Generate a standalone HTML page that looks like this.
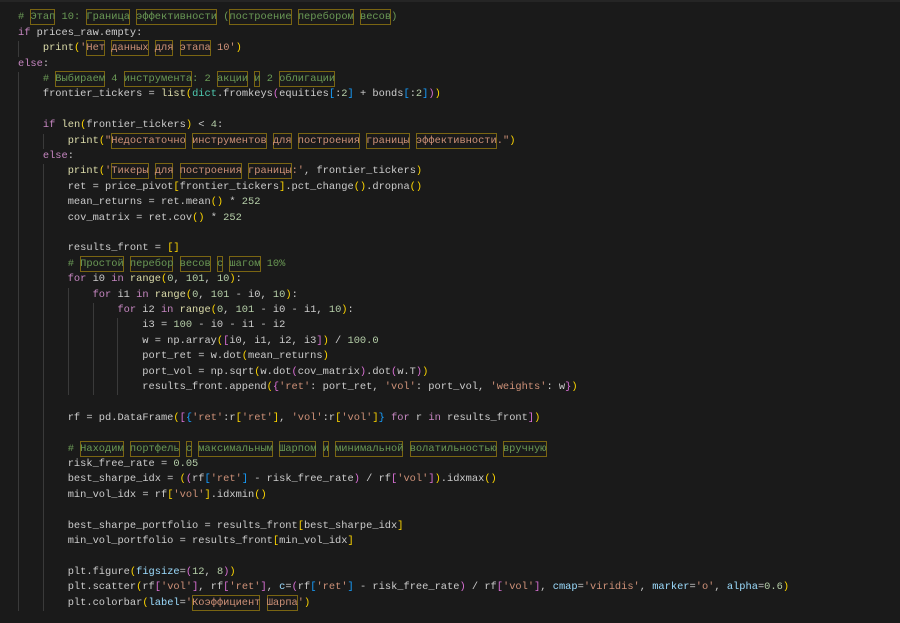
<!DOCTYPE html>
<html><head><meta charset="utf-8"><style>
html,body{margin:0;padding:0;background:#1a1a1a;width:900px;height:623px;overflow:hidden}
.top{position:absolute;left:0;top:0;width:900px;height:2px;background:#252525}
.code{position:absolute;left:18px;top:10.3px;font-family:"Liberation Mono",monospace;font-size:10.37px;line-height:15.42px;color:#cccccc}
.l{height:15.42px;white-space:pre}
i{display:inline-block;width:4ch;height:15.42px;vertical-align:top;box-shadow:inset 1px 0 0 #3a3a3a;font-style:normal}
.k{color:#c586c0}.f{color:#dcdcaa}.s{color:#ce9178}.c{color:#6a9955}.n{color:#b5cea8}.p{color:#9cdcfe}.t{color:#4ec9b0}
.b1{color:#ffd700}.b2{color:#da70d6}.b3{color:#179fff}
.u{padding:2px 0;box-shadow:inset 0 0 0 1px #7a6512}
</style></head><body><div class="top"></div>
<div class="code">
<div class="l"><span class="c"># <span class="u">Этап</span> 10: <span class="u">Граница</span> <span class="u">эффективности</span> (<span class="u">построение</span> <span class="u">перебором</span> <span class="u">весов</span>)</span></div>
<div class="l"><span class="k">if</span> prices_raw.empty:</div>
<div class="l"><i></i><span class="f">print</span><span class="b1">(</span><span class="s">'<span class="u">Нет</span> <span class="u">данных</span> <span class="u">для</span> <span class="u">этапа</span> 10'</span><span class="b1">)</span></div>
<div class="l"><span class="k">else</span>:</div>
<div class="l"><i></i><span class="c"># <span class="u">Выбираем</span> 4 <span class="u">инструмента</span>: 2 <span class="u">акции</span> <span class="u">и</span> 2 <span class="u">облигации</span></span></div>
<div class="l"><i></i>frontier_tickers = <span class="f">list</span><span class="b1">(</span><span class="t">dict</span>.fromkeys<span class="b2">(</span>equities<span class="b3">[</span>:<span class="n">2</span><span class="b3">]</span> + bonds<span class="b3">[</span>:<span class="n">2</span><span class="b3">]</span><span class="b2">)</span><span class="b1">)</span></div>
<div class="l"><i></i></div>
<div class="l"><i></i><span class="k">if</span> <span class="f">len</span><span class="b1">(</span>frontier_tickers<span class="b1">)</span> &lt; <span class="n">4</span>:</div>
<div class="l"><i></i><i></i><span class="f">print</span><span class="b1">(</span><span class="s">"<span class="u">Недостаточно</span> <span class="u">инструментов</span> <span class="u">для</span> <span class="u">построения</span> <span class="u">границы</span> <span class="u">эффективности</span>."</span><span class="b1">)</span></div>
<div class="l"><i></i><span class="k">else</span>:</div>
<div class="l"><i></i><i></i><span class="f">print</span><span class="b1">(</span><span class="s">'<span class="u">Тикеры</span> <span class="u">для</span> <span class="u">построения</span> <span class="u">границы</span>:'</span>, frontier_tickers<span class="b1">)</span></div>
<div class="l"><i></i><i></i>ret = price_pivot<span class="b1">[</span>frontier_tickers<span class="b1">]</span>.pct_change<span class="b1">()</span>.dropna<span class="b1">()</span></div>
<div class="l"><i></i><i></i>mean_returns = ret.mean<span class="b1">()</span> * <span class="n">252</span></div>
<div class="l"><i></i><i></i>cov_matrix = ret.cov<span class="b1">()</span> * <span class="n">252</span></div>
<div class="l"><i></i><i></i></div>
<div class="l"><i></i><i></i>results_front = <span class="b1">[]</span></div>
<div class="l"><i></i><i></i><span class="c"># <span class="u">Простой</span> <span class="u">перебор</span> <span class="u">весов</span> <span class="u">с</span> <span class="u">шагом</span> 10%</span></div>
<div class="l"><i></i><i></i><span class="k">for</span> i0 <span class="k">in</span> <span class="f">range</span><span class="b1">(</span><span class="n">0</span>, <span class="n">101</span>, <span class="n">10</span><span class="b1">)</span>:</div>
<div class="l"><i></i><i></i><i></i><span class="k">for</span> i1 <span class="k">in</span> <span class="f">range</span><span class="b1">(</span><span class="n">0</span>, <span class="n">101</span> - i0, <span class="n">10</span><span class="b1">)</span>:</div>
<div class="l"><i></i><i></i><i></i><i></i><span class="k">for</span> i2 <span class="k">in</span> <span class="f">range</span><span class="b1">(</span><span class="n">0</span>, <span class="n">101</span> - i0 - i1, <span class="n">10</span><span class="b1">)</span>:</div>
<div class="l"><i></i><i></i><i></i><i></i><i></i>i3 = <span class="n">100</span> - i0 - i1 - i2</div>
<div class="l"><i></i><i></i><i></i><i></i><i></i>w = np.array<span class="b1">(</span><span class="b2">[</span>i0, i1, i2, i3<span class="b2">]</span><span class="b1">)</span> / <span class="n">100.0</span></div>
<div class="l"><i></i><i></i><i></i><i></i><i></i>port_ret = w.dot<span class="b1">(</span>mean_returns<span class="b1">)</span></div>
<div class="l"><i></i><i></i><i></i><i></i><i></i>port_vol = np.sqrt<span class="b1">(</span>w.dot<span class="b2">(</span>cov_matrix<span class="b2">)</span>.dot<span class="b2">(</span>w.T<span class="b2">)</span><span class="b1">)</span></div>
<div class="l"><i></i><i></i><i></i><i></i><i></i>results_front.append<span class="b1">(</span><span class="b2">{</span><span class="s">'ret'</span>: port_ret, <span class="s">'vol'</span>: port_vol, <span class="s">'weights'</span>: w<span class="b2">}</span><span class="b1">)</span></div>
<div class="l"><i></i><i></i></div>
<div class="l"><i></i><i></i>rf = pd.DataFrame<span class="b1">(</span><span class="b2">[</span><span class="b3">{</span><span class="s">'ret'</span>:r<span class="b1">[</span><span class="s">'ret'</span><span class="b1">]</span>, <span class="s">'vol'</span>:r<span class="b1">[</span><span class="s">'vol'</span><span class="b1">]</span><span class="b3">}</span> <span class="k">for</span> r <span class="k">in</span> results_front<span class="b2">]</span><span class="b1">)</span></div>
<div class="l"><i></i><i></i></div>
<div class="l"><i></i><i></i><span class="c"># <span class="u">Находим</span> <span class="u">портфель</span> <span class="u">с</span> <span class="u">максимальным</span> <span class="u">Шарпом</span> <span class="u">и</span> <span class="u">минимальной</span> <span class="u">волатильностью</span> <span class="u">вручную</span></span></div>
<div class="l"><i></i><i></i>risk_free_rate = <span class="n">0.05</span></div>
<div class="l"><i></i><i></i>best_sharpe_idx = <span class="b1">(</span><span class="b2">(</span>rf<span class="b3">[</span><span class="s">'ret'</span><span class="b3">]</span> - risk_free_rate<span class="b2">)</span> / rf<span class="b2">[</span><span class="s">'vol'</span><span class="b2">]</span><span class="b1">)</span>.idxmax<span class="b1">()</span></div>
<div class="l"><i></i><i></i>min_vol_idx = rf<span class="b1">[</span><span class="s">'vol'</span><span class="b1">]</span>.idxmin<span class="b1">()</span></div>
<div class="l"><i></i><i></i></div>
<div class="l"><i></i><i></i>best_sharpe_portfolio = results_front<span class="b1">[</span>best_sharpe_idx<span class="b1">]</span></div>
<div class="l"><i></i><i></i>min_vol_portfolio = results_front<span class="b1">[</span>min_vol_idx<span class="b1">]</span></div>
<div class="l"><i></i><i></i></div>
<div class="l"><i></i><i></i>plt.figure<span class="b1">(</span><span class="p">figsize</span>=<span class="b2">(</span><span class="n">12</span>, <span class="n">8</span><span class="b2">)</span><span class="b1">)</span></div>
<div class="l"><i></i><i></i>plt.scatter<span class="b1">(</span>rf<span class="b2">[</span><span class="s">'vol'</span><span class="b2">]</span>, rf<span class="b2">[</span><span class="s">'ret'</span><span class="b2">]</span>, <span class="p">c</span>=<span class="b2">(</span>rf<span class="b3">[</span><span class="s">'ret'</span><span class="b3">]</span> - risk_free_rate<span class="b2">)</span> / rf<span class="b2">[</span><span class="s">'vol'</span><span class="b2">]</span>, <span class="p">cmap</span>=<span class="s">'viridis'</span>, <span class="p">marker</span>=<span class="s">'o'</span>, <span class="p">alpha</span>=<span class="n">0.6</span><span class="b1">)</span></div>
<div class="l"><i></i><i></i>plt.colorbar<span class="b1">(</span><span class="p">label</span>=<span class="s">'<span class="u">Коэффициент</span> <span class="u">Шарпа</span>'</span><span class="b1">)</span></div>
</div>
</body></html>
